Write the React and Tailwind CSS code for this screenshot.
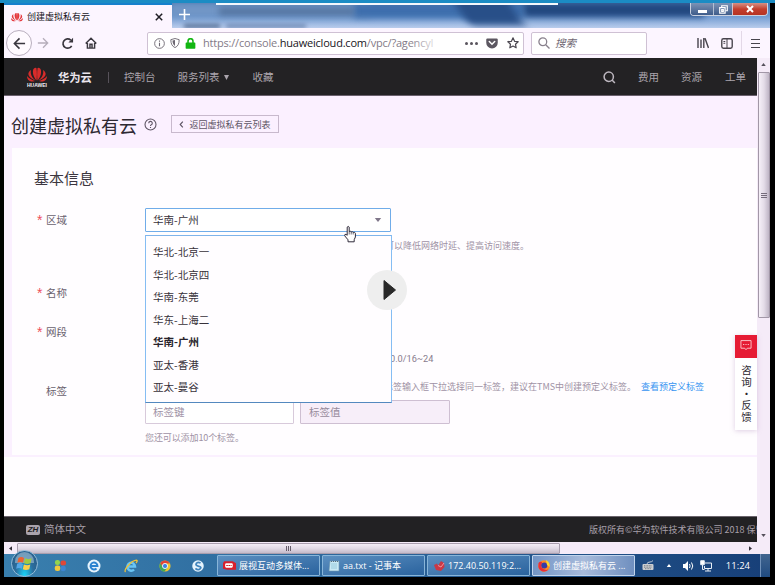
import React from "react";

const regions = ["华北-北京一", "华北-北京四", "华南-东莞", "华东-上海二", "华南-广州", "亚太-香港", "亚太-曼谷"];

function HuaweiLogo({ className }) {
  return (
    <svg viewBox="0 0 40 30" className={className} fill="currentColor">
      <path d="M19 27C13 20 10 11 13 4C16 1 18 1 19 3C20 10 20 19 19 27Z" />
      <path d="M21 27C27 20 30 11 27 4C24 1 22 1 21 3C20 10 20 19 21 27Z" />
      <path d="M17 27C10 21 6 14 8 6C4 8 2 12 3 16C5 21 11 25 17 27Z" />
      <path d="M23 27C30 21 34 14 32 6C36 8 38 12 37 16C35 21 29 25 23 27Z" />
      <path d="M16 28C10 26 4 23 0 18C0 24 3 28 8 29C11 29 14 29 16 28Z" />
      <path d="M24 28C30 26 36 23 40 18C40 24 37 28 32 29C29 29 26 29 24 28Z" />
    </svg>
  );
}

function TabStrip() {
  return (
    <div className="relative flex h-[25px] shrink-0 overflow-hidden bg-linear-to-b from-[#4676af] via-[#6d98cf] to-[#b9ccec]">
      <div className="absolute inset-0">
        <div className="absolute left-[166px] top-0 h-[14px] w-[200px] bg-[#7196c6] blur-[3px]" />
        <div className="absolute left-[350px] top-0 h-[15px] w-[170px] bg-[#3d6ead] blur-[3px]" />
        <div className="absolute left-[455px] -top-2 h-[30px] w-[55px] -skew-x-[-35deg] bg-[#284f88] blur-[4px]" />
        <div className="absolute left-[520px] top-0 h-[14px] w-[180px] bg-[#21477f] blur-[3px]" />
        <div className="absolute left-[215px] top-[5px] h-[7px] w-[135px] bg-[#3c5880]/60 blur-[3px]" />
        <div className="absolute left-[180px] top-[21px] h-[4px] w-[36px] bg-[#536d94] blur-[2px]" />
        <div className="absolute left-[222px] top-[21px] h-[4px] w-[80px] bg-[#5f7ba8]/80 blur-[2px]" />
        <div className="absolute left-[212px] top-0 h-[2px] w-[342px] bg-[#f3f7fc]" />
      </div>
      <div className="relative flex h-full w-[168px] items-center border-t-2 border-[#1780cc] bg-[#fcf5ff] pl-[7px]">
        <HuaweiLogo className="h-[10px] w-[12px] text-[#e4373c]" />
        <span className="ml-[4px] text-[9px] text-[#15131a]">创建虚拟私有云</span>
        <svg viewBox="0 0 8 8" className="ml-auto mr-[9px] size-[8px]" stroke="#201e25" strokeWidth="1.5">
          <path d="M.8.8l6.4 6.4M7.2.8L.8 7.2" />
        </svg>
      </div>
      <svg viewBox="0 0 11 11" className="relative ml-[7px] mt-[6px] size-[11px]" stroke="#fff" strokeWidth="1.6">
        <path d="M5.5 0v11M0 5.5h11" />
      </svg>
      <div className="relative ml-auto mr-[2px] flex h-[13px] overflow-hidden rounded-b-[4px] border border-t-0 border-[#cbd2e0]">
        <div className="flex w-[22px] items-center justify-center bg-linear-to-b from-[#7d93b5] to-[#3f5c8a]">
          <span className="mt-[4px] h-[3px] w-[9px] bg-white" />
        </div>
        <div className="flex w-[19px] items-center justify-center border-l border-[#b4c0d3] bg-linear-to-b from-[#7d93b5] to-[#3f5c8a]">
          <svg viewBox="0 0 10 10" className="size-[9px]" fill="none" stroke="#fff" strokeWidth="1.3">
            <path d="M3 2.6V.8h6.2v5.6H7.6M.8 3h6v6h-6zM3 5.2h1.8v1.8H3z" />
          </svg>
        </div>
        <div className="flex w-[35px] items-center justify-center border-l border-[#d4c0c7] bg-linear-to-b from-[#d48f86] via-[#c33e2d] to-[#b63222]">
          <svg viewBox="0 0 8 8" className="size-[8px]" stroke="#fff" strokeWidth="2">
            <path d="M1 1l6 6M7 1L1 7" />
          </svg>
        </div>
      </div>
    </div>
  );
}

function Toolbar() {
  return (
    <div className="flex h-[30px] shrink-0 items-center bg-[#fcf5ff]">
      <div className="ml-[2px] flex size-[26px] items-center justify-center rounded-full border border-[#b9afbe] bg-[#fffaff]">
        <svg viewBox="0 0 14 14" className="size-[13px]" fill="none" stroke="#3a373f" strokeWidth="1.7">
          <path d="M13 7H1.5M7 1.5L1.5 7L7 12.5" />
        </svg>
      </div>
      <svg viewBox="0 0 14 14" className="ml-[5px] size-[12px]" fill="none" stroke="#b5adba" strokeWidth="1.5">
        <path d="M1 7h11.5M7 1.5L12.500 7L7 12.500" />
      </svg>
      <svg viewBox="0 0 14 14" className="ml-[12px] size-[13px]" fill="none" stroke="#3a373f" strokeWidth="1.8">
        <path d="M11.500 9.500A5 5 0 1 1 10.500 3.300" />
        <path d="M13 .8v5H8z" fill="#3a373f" stroke="none" />
      </svg>
      <svg viewBox="0 0 14 14" className="ml-[11px] size-[12px]" fill="none" stroke="#3a373f" strokeWidth="1.7">
        <path d="M.8 7.500L7 1.500L13.200 7.500M2.800 7v6h8.400V7M5.800 13V8.500h2.400V13" />
      </svg>

      <div className="ml-[50px] flex h-[23px] w-[377px] items-center rounded-[2px] border border-[#cfc1d4] bg-white">
        <svg viewBox="0 0 12 12" className="ml-[6px] size-[11px]" fill="none" stroke="#6d6872" strokeWidth="1">
          <circle cx="6" cy="6" r="5.300" />
          <path d="M6 5.200v3.800M6 2.800v1.200" strokeWidth="1.200" />
        </svg>
        <svg viewBox="0 0 12 12" className="ml-[5px] size-[10px]" fill="none" stroke="#6d6872" strokeWidth="1.100">
          <path d="M1 2L6 .6L11 2C11 7 9.500 10 6 11.500C2.500 10 1 7 1 2Z" />
          <path d="M3 3L6 2.300V9.500C4 8.300 3 6 3 3Z" fill="#6d6872" stroke="none" />
        </svg>
        <svg viewBox="0 0 12 12" className="ml-[5px] size-[11px]" fill="#12b612">
          <path d="M1.500 5H10.500a.8.8 0 0 1 .8.800V11a.7.7 0 0 1-.7.700H1.400A.7.700 0 0 1 .7 11V5.800A.8.800 0 0 1 1.500 5Z" />
          <path d="M3.300 5.500V3.500a2.700 2.700 0 0 1 5.400 0v2" fill="none" stroke="#12b612" strokeWidth="1.700" />
        </svg>
        <div className="relative ml-[7px] w-[240px] overflow-hidden whitespace-nowrap font-['Open_Sans','Noto_Sans',sans-serif] text-[11px] leading-[18px] tracking-[-0.2px] text-[#837a87]">
          https://console.<span className="text-[#17151b]">huaweicloud.com</span>/vpc/?agencyI
          <div className="absolute inset-y-0 right-[4px] w-[30px] bg-linear-to-r from-white/0 to-white/90" />
        </div>
        <div className="ml-auto flex gap-[2px]">
          <span className="size-[3px] rounded-full bg-[#59545d]" />
          <span className="size-[3px] rounded-full bg-[#59545d]" />
          <span className="size-[3px] rounded-full bg-[#59545d]" />
        </div>
        <svg viewBox="0 0 14 13" className="ml-[8px] h-[11px] w-[12px]">
          <path d="M1.500.5h11A1.300 1.300 0 0 1 13.800 1.800V5.500A6.800 6.800 0 0 1 .2 5.500V1.800A1.300 1.300 0 0 1 1.500.5Z" fill="#5c5761" />
          <path d="M3.800 4.200L7 7.300L10.200 4.200" fill="none" stroke="#fff" strokeWidth="1.800" strokeLinecap="round" />
        </svg>
        <svg viewBox="0 0 14 14" className="ml-[9px] mr-[4px] size-[12px]" fill="none" stroke="#4b4750" strokeWidth="1.400" strokeLinejoin="round">
          <path d="M7 1l1.800 4 4.200.500-3.100 2.900.8 4.200L7 10.500l-3.700 2.100.8-4.200L1 5.500 5.200 5z" />
        </svg>
      </div>

      <div className="ml-[7px] flex h-[23px] w-[116px] items-center rounded-[2px] border border-[#cfc1d4] bg-white">
        <svg viewBox="0 0 12 12" className="ml-[6px] size-[12px]" fill="none" stroke="#88808c" strokeWidth="1.300">
          <circle cx="4.800" cy="4.800" r="3.900" />
          <path d="M7.700 7.700L11.500 11.500" />
        </svg>
        <span className="ml-[5px] text-[10.5px] italic text-[#6f6773]">搜索</span>
      </div>
      <svg viewBox="0 0 12 12" className="ml-[50px] size-[12px]" stroke="#48444d" strokeWidth="1.400">
        <path d="M1 1v10M4 2.500V11M6.800 1v10M8 1.200L11.500 11" />
      </svg>
      <svg viewBox="0 0 13 12" className="ml-[12px] h-[11px] w-[12px]" fill="none" stroke="#48444d" strokeWidth="1.500">
        <rect x=".8" y=".8" width="11.400" height="10.400" rx="1.800" />
        <path d="M6.500 1v10M2.600 3.700h2M2.600 5.800h2" strokeWidth="1.100" />
      </svg>
      <div className="ml-[8px] h-[24px] w-px bg-[#e3d8e7]" />
      <div className="ml-[9px] flex w-[9px] flex-col gap-[3px]">
        <span className="h-px bg-[#48444d]" />
        <span className="h-px bg-[#48444d]" />
        <span className="h-px bg-[#48444d]" />
      </div>
    </div>
  );
}

function SiteHeader() {
  return (
    <div className="flex h-[38px] shrink-0 items-center whitespace-nowrap border-b border-[#6a606d] bg-[#232224] pt-[2px] text-[10.5px] text-[#aba5ad]">
      <div className="-mt-px ml-[23px] flex w-[20px] flex-col items-center">
        <HuaweiLogo className="h-[15px] w-[20px] text-[#d92c2b]" />
        <span className="mt-[1px] font-['Liberation_Sans',sans-serif] text-[5px] font-bold leading-[5px] text-[#f4eef5]">HUAWEI</span>
      </div>
      <span className="ml-[11px] text-[11.3px] font-bold text-[#ece6ee]">华为云</span>
      <span className="ml-[16px] h-[11px] w-px bg-[#57525a]" />
      <span className="ml-[15px]">控制台</span>
      <span className="ml-[22px]">服务列表</span>
      <svg viewBox="0 0 6 6" className="ml-[5px] size-[5px]" fill="#aba5ad"><path d="M0 0h6L3 6z" /></svg>
      <span className="ml-[23px]">收藏</span>
      <svg viewBox="0 0 12 12" className="ml-auto size-[13px]" fill="none" stroke="#bdb7bf" strokeWidth="1.400">
        <circle cx="5.300" cy="5.300" r="4.300" />
        <path d="M8.300 8.300L11 11" />
      </svg>
      <span className="ml-[22px]">费用</span>
      <span className="ml-[22px]">资源</span>
      <span className="ml-[23px] mr-[11px]">工单</span>
    </div>
  );
}

function Label({ required, children }) {
  return (
    <div className="flex w-[111px] shrink-0 items-center text-[10.5px] text-[#6a616e]">
      <span className="w-[12px] pl-[3px] font-['Liberation_Sans',sans-serif] text-[14px] leading-none text-[#ee4f5b]">{required ? "*" : ""}</span>
      {children}
    </div>
  );
}

function RegionSelect() {
  return (
    <div className="relative h-[24px] w-[246px]">
      <div className="flex h-full items-center rounded-[1px] border border-[#70ace9] bg-white pl-[7px] text-[10.5px] text-[#37313a]">
        华南-广州
        <svg viewBox="0 0 8 5" className="ml-auto mr-[8px] h-[4px] w-[8px]" fill="#80778a"><path d="M0 0h8L4 5z" /></svg>
      </div>
      <ul className="absolute left-0 top-[27px] z-10 flex h-[168px] w-[247px] flex-col border border-x-[#85bdf3] border-t-[#7fb4ea] border-b-[#5389bf] bg-[#fffdff] pl-[7px] pt-[5px] text-[10.5px] text-[#37313a]">
        {regions.map((r) => (
          <li key={r} className={r === "华南-广州" ? "flex h-[22.5px] items-center font-bold text-[#28232b]" : "flex h-[22.5px] items-center"}>{r}</li>
        ))}
      </ul>
      <svg viewBox="0 0 12 17" className="absolute left-[199px] top-[17px] z-20 h-[18px] w-[12px]" fill="#fff" stroke="#302b3b" strokeWidth="1" strokeLinejoin="round">
        <path d="M3.200 9.800V1.600Q4.200.2 5.200 1.600V6Q6.400 5.200 7.200 6.400Q8.400 5.600 9.200 6.900Q10.800 6.200 11.400 8V11.500L10.200 14.200V16.300H4V14.300L.7 10.300Q.4 8.600 2 8.800Z" />
        <path d="M5.200 6v3M7.200 6.400V9M9.200 6.900V9" fill="none" strokeWidth=".7" />
      </svg>
    </div>
  );
}

function FormCard() {
  return (
    <section className="ml-[8px] h-[307px] whitespace-nowrap bg-[#fffdff] pl-[22px] text-[9px] text-[#a092a5]">
      <h2 className="flex h-[60px] items-center pb-[2px] text-[15px] text-[#3c3640]">基本信息</h2>
      <div className="flex h-[24px]">
        <Label required>区域</Label>
        <RegionSelect />
      </div>
      <div className="flex h-[26px] items-center pl-[351px]">可以降低网络时延、提高访问速度。</div>
      <div className="mt-[23px] flex h-[24px]"><Label required>名称</Label></div>
      <div className="mt-[15px] flex h-[24px]"><Label required>网段</Label></div>
      <div className="flex h-[28px] items-center pl-[356px] pt-[2px] font-['Roboto',sans-serif] text-[9.2px] text-[#887c8d]">0.0/16~24</div>
      <div className="mt-[4px] flex">
        <div className="flex h-[31px]"><Label>标签</Label></div>
        <div>
          <div className="flex h-[20px] items-center pl-[239px]">
            标签输入框下拉选择同一标签，建议在TMS中创建预定义标签。
            <a className="ml-[5px] text-[#3794f1]">查看预定义标签</a>
          </div>
          <div className="mt-[4px] flex gap-[6px] text-[10.5px]">
            <div className="flex h-[24px] w-[149px] items-center rounded-[1px] border border-[#d8cadb] bg-white pl-[7px]">标签键</div>
            <div className="flex h-[24px] w-[150px] items-center rounded-[1px] border border-[#cebfd2] bg-[#f7eef9] pl-[8px] text-[#988b9c]">标签值</div>
          </div>
          <div className="mt-[4px] flex h-[19px] items-center tracking-[-0.1px]">您还可以添加10个标签。</div>
        </div>
      </div>
    </section>
  );
}

function FeedbackWidget() {
  return (
    <aside className="absolute right-0 top-[239px] z-20 flex h-[95px] w-[22px] flex-col items-center bg-white text-[10.5px] leading-[12px] text-[#2c272f] shadow-[0_1px_5px_rgba(160,120,175,0.35)]">
      <div className="mb-[7px] flex h-[23px] w-full items-center justify-center bg-[#e61b34]">
        <svg viewBox="0 0 14 13" className="mt-[-2px] h-[11px] w-[12px]" fill="none" stroke="#ffd9dc" strokeWidth="1">
          <path d="M1 .7h12v9H8.500L7 11.500L5.500 9.700H1zM3.500 5.300H5M6.300 5.300h1.400M9 5.300h1.500" />
        </svg>
      </div>
      <span className="tracking-[1.2px] [text-orientation:upright] [writing-mode:vertical-rl]">咨询·反馈</span>
    </aside>
  );
}

function PageView() {
  return (
    <div className="flex w-[753px] shrink-0 flex-col">
      <SiteHeader />
      <main className="relative h-[420px] bg-[#fffdff]">
        <div className="h-[361px] bg-[#fbf0ff] pb-[2px]">
          <div className="flex h-[52px] items-center pl-[7px] pt-[8px]">
            <h1 className="-mt-[2px] text-[18px] leading-none text-[#2e2932]">创建虚拟私有云</h1>
            <svg viewBox="0 0 13 13" className="-mt-[3px] ml-[7px] size-[13px]" fill="none" stroke="#5f5665" strokeWidth="1.100">
              <circle cx="6.500" cy="6.500" r="5.500" />
              <path d="M4.700 5.200a1.800 1.800 0 1 1 2.600 1.600q-.8.400-.8 1.200M6.500 9v1" />
            </svg>
            <button className="-mt-[4px] ml-[14px] flex h-[18px] w-[108px] items-center justify-center whitespace-nowrap border border-[#c8b9cd] text-[9px] text-[#5d5463]">
              <svg viewBox="0 0 5 8" className="mr-[5px] h-[7px] w-[5px]" fill="none" stroke="#5d5463" strokeWidth="1.300"><path d="M4 .8L1 4L4 7.200" /></svg>
              返回虚拟私有云列表
            </button>
          </div>
          <FormCard />
        </div>
        <FeedbackWidget />
      </main>
      <footer className="flex h-[26px] items-center overflow-hidden whitespace-nowrap border-t border-[#6a636c] bg-[#222123] pl-[22px] text-[10.5px] text-[#a69fa8]">
        <span className="flex h-[10px] w-[14px] shrink-0 items-center justify-center rounded-[2px] bg-[#aaa3ac] font-['Liberation_Sans',sans-serif] text-[8px] font-bold italic leading-none text-[#222123]">ZH</span>
        <span className="ml-[4px]">简体中文</span>
        <span className="ml-auto w-[168px] shrink-0 overflow-hidden text-[9px] leading-[14px]">版权所有©华为软件技术有限公司 2018 保留一切权利</span>
      </footer>
    </div>
  );
}

function VerticalScrollbar() {
  return (
    <div className="flex w-[13px] flex-col items-center bg-[#f5ebf8]">
      <svg viewBox="0 0 6 4" className="mt-[5px] h-[3px] w-[5px]" fill="#55505b"><path d="M0 4h6L3 0z" /></svg>
      <div className="mt-[6px] flex h-[246px] w-[12px] flex-col items-center justify-center gap-[1px] rounded-[1px] border border-[#a297a7] bg-linear-to-r from-[#f6f0f8] via-[#e4dce8] to-[#bfb5c5]">
        <span className="h-px w-[6px] bg-[#756c7b]" />
        <span className="h-px w-[6px] bg-[#756c7b]" />
        <span className="h-px w-[6px] bg-[#756c7b]" />
      </div>
      <svg viewBox="0 0 6 4" className="mb-[5px] mt-auto h-[3px] w-[5px]" fill="#55505b"><path d="M0 0h6L3 4z" /></svg>
    </div>
  );
}

function HorizontalScrollbar() {
  return (
    <div className="flex h-[12px] shrink-0 items-center bg-[#f5ebf8]">
      <svg viewBox="0 0 4 6" className="ml-[5px] h-[5px] w-[3px]" fill="#35303b"><path d="M4 0v6L0 3z" /></svg>
      <div className="ml-[5px] flex h-[11px] w-[543px] items-center justify-center gap-[1px] rounded-[1px] border border-[#a99eae] bg-linear-to-b from-[#f4edf6] via-[#e1d9e5] to-[#c4bac9]">
        <span className="h-[5px] w-px bg-[#655c6b]" />
        <span className="h-[5px] w-px bg-[#655c6b]" />
        <span className="h-[5px] w-px bg-[#655c6b]" />
      </div>
      <svg viewBox="0 0 4 6" className="ml-auto mr-[18px] h-[5px] w-[3px]" fill="#35303b"><path d="M0 0v6L4 3z" /></svg>
    </div>
  );
}

function TaskButton({ icon, active, children }) {
  return (
    <div className={active
      ? "flex h-[21px] w-[103px] shrink-0 items-center gap-[3px] overflow-hidden rounded-[1px] border border-[#c1d4ec] bg-linear-to-r from-[#7395c5] via-[#a8bbdb] to-[#6f8fbf] pl-[5px]"
      : "flex h-[21px] w-[103px] shrink-0 items-center gap-[3px] overflow-hidden rounded-[1px] border border-[#88b5d9] bg-linear-to-br from-[#5b8fc0] to-[#2a639e] pl-[5px]"}>
      {icon}
      <span>{children}</span>
    </div>
  );
}

function Taskbar() {
  return (
    <div className="flex h-[23px] shrink-0 items-center whitespace-nowrap bg-linear-to-r from-[#397fae] via-[#2b6398] to-[#173f78] font-['Open_Sans','Noto_Sans_CJK_SC',sans-serif] text-[9px] text-white">
      <div className="relative z-10 -mt-[4px] ml-[7px] flex size-[27px] shrink-0 items-center justify-center rounded-full border border-[#94bcd8] bg-radial-[at_50%_100%] from-[#19d6fa] via-[#2b6f9f] to-[#29567f]">
        <div className="absolute inset-x-[3px] top-[1px] h-[11px] rounded-t-full bg-white/35" />
        <svg viewBox="0 0 18 16" className="relative h-[15px] w-[17px]">
          <path d="M2.500 2Q5.500.3 8.500 2L7.500 7.200Q4.500 5.600 1.400 7.200Z" fill="#ec6233" />
          <path d="M9.500 2.500Q13 4.200 16.600 2.500L15.500 7.800Q12 9.300 8.500 7.800Z" fill="#a1ca42" />
          <path d="M1.200 8.300Q4.300 6.800 7.300 8.400L6.200 13.500Q3.200 12 .1 13.500Z" fill="#55a7e6" />
          <path d="M8.300 9Q11.800 10.600 15.200 9L14.100 14Q10.600 15.600 7.200 14Z" fill="#fccf49" />
        </svg>
      </div>
      <svg viewBox="0 0 14 14" className="ml-[16px] size-[13px]">
        <rect x="1" y="1" width="5.500" height="5.500" rx="2.500" fill="#94d34d" />
        <rect x="7" y="1.500" width="6" height="5.500" rx="2.500" fill="#df4837" />
        <rect x=".8" y="7" width="6" height="6" rx="2.500" fill="#f2c83b" />
        <rect x="7.200" y="7.300" width="5.500" height="6" rx="2.500" fill="#3d85d1" />
      </svg>
      <svg viewBox="0 0 14 14" className="ml-[20px] size-[14px]">
        <circle cx="7" cy="7" r="6.500" fill="#e6f3fc" />
        <path d="M3.500 7H10.500A3.500 3.500 0 1 0 9.500 9.500" fill="none" stroke="#2a82d0" strokeWidth="1.900" />
      </svg>
      <svg viewBox="0 0 14 14" className="ml-[23px] size-[14px]" fill="none">
        <path d="M4 7.500H11A3.800 4 0 1 0 10 10.500" stroke="#69c4f4" strokeWidth="2.500" />
        <path d="M1.500 13C-.5 11 7 1.500 12.500 1.200Q14 1.500 12 4" stroke="#f0c239" strokeWidth="1.300" />
      </svg>
      <svg viewBox="0 0 14 14" className="ml-[21px] size-[12px]">
        <circle cx="7" cy="7" r="6.500" fill="#efc52f" />
        <path d="M1.400 3.700A6.500 6.500 0 0 1 12.700 4H7L4.200 8.500Z" fill="#e34436" />
        <path d="M1.400 3.700A6.500 6.500 0 0 0 6.500 13.500L9.500 9L4.500 8.500Z" fill="#43a953" />
        <circle cx="7" cy="7" r="3" fill="#3c83e2" stroke="#fff" />
      </svg>
      <svg viewBox="0 0 14 14" className="ml-[21px] size-[12px]">
        <circle cx="7" cy="7" r="6.700" fill="#e7f4fd" />
        <path d="M10 3.500Q6.500 1.700 5 4T8 7.500T8.500 11Q6 12 4 9.700" fill="none" stroke="#4285bd" strokeWidth="2" />
      </svg>
      <div className="ml-[13px] flex gap-[2px]">
        <TaskButton icon={
          <svg viewBox="0 0 12 12" className="size-[13px] shrink-0">
            <path d="M1 2h8l3 2v6H4L0 9V4z" fill="#d71f2c" />
            <rect x="2" y="4" width="7" height="4" rx="1" fill="#fff" />
            <path d="M3 6h5" stroke="#d71f2c" strokeDasharray="1.500 .5" />
          </svg>
        }>展视互动多媒体...</TaskButton>
        <TaskButton icon={
          <svg viewBox="0 0 12 12" className="size-[12px] shrink-0">
            <path d="M2 1h9v10H1z" fill="#c9eaf5" stroke="#6b93ab" strokeWidth=".6" />
            <path d="M3 1.500h7" stroke="#5a6f7b" strokeDasharray="1 1" />
            <path d="M3 4h6M3 6h6M3 8h6" stroke="#81bdd1" strokeWidth=".7" />
          </svg>
        }>aa.txt - 记事本</TaskButton>
        <TaskButton icon={
          <svg viewBox="0 0 12 12" className="size-[12px] shrink-0">
            <path d="M1 5L4 3.500L5 5.500L8 1L11 3L11.500 7L8 11L3 10Z" fill="#ca3845" />
            <path d="M5 5.500L8 7L11 3" stroke="#f39298" fill="none" />
          </svg>
        }>172.40.50.119:2...</TaskButton>
        <TaskButton active icon={
          <svg viewBox="0 0 12 12" className="size-[12px] shrink-0">
            <circle cx="6" cy="6" r="5.800" fill="#ff8a22" />
            <path d="M.5 3Q2 1 4 2L3.200 7Q6 11 10.500 9.500A5.800 5.800 0 0 1 .4 7Z" fill="#e92d3a" />
            <circle cx="6.300" cy="5.500" r="3" fill="#353ca7" />
            <path d="M8 0Q12.500 3 11.500 7L9 5Z" fill="#ffd92f" />
          </svg>
        }>创建虚拟私有云 ...</TaskButton>
      </div>
      <svg viewBox="0 0 12 11" className="ml-auto h-[11px] w-[12px] shrink-0">
        <path d="M5 4Q5 2 8 2Q10 2 11 .5" fill="none" stroke="#dfe4ea" strokeWidth=".8" />
        <rect x=".5" y="4" width="11" height="6" rx="1" fill="#cbced1" />
        <path d="M2 5.700h8M2 7.200h8M3 8.700h6" stroke="#626a73" strokeWidth=".8" strokeDasharray="1 .6" />
      </svg>
      <svg viewBox="0 0 6 4" className="ml-[12px] h-[3px] w-[6px]" fill="#fff"><path d="M0 4h6L3 0z" /></svg>
      <svg viewBox="0 0 12 12" className="ml-[10px] size-[12px]" fill="none" stroke="#fff">
        <path d="M1 4h2l3-3v10L3 8H1z" fill="#fff" stroke="none" />
        <path d="M7.500 4q1.200 2 0 4M9.500 2.500q2.500 3.500 0 7" />
      </svg>
      <svg viewBox="0 0 12 12" className="ml-[6px] size-[12px]" fill="none" stroke="#e6edf5">
        <path d="M5 3h6.500v5.500H4.500V6M8 9v2M5 11h6M2.500 5v4.500h2" />
        <path d="M.7.700h3.600v4H.7z" fill="#fff" />
      </svg>
      <span className="ml-[14px] text-[9.5px]">11:24</span>
      <div className="ml-[10px] h-full w-[10px] shrink-0 border-l border-[#6f90b8] bg-linear-to-b from-[#41658f] to-[#204b80]" />
    </div>
  );
}

export default function App() {
  return (
    <div className="relative flex h-[585px] w-[775px] flex-col overflow-hidden bg-black font-['Noto_Sans_CJK_SC',sans-serif] leading-none">
      <div className="h-[3px] shrink-0 bg-[#1b8cc4]" />
      <div className="ml-[4px] flex w-[766px] flex-col">
        <TabStrip />
        <Toolbar />
        <div className="flex h-[484px]">
          <PageView />
          <VerticalScrollbar />
        </div>
        <HorizontalScrollbar />
        <Taskbar />
      </div>
      <button className="absolute left-[367px] top-[270px] z-30 flex size-[40px] items-center justify-center rounded-full bg-[#eeeeee]">
        <svg viewBox="0 0 13 20" className="ml-[4px] h-[20px] w-[13px]" fill="#292929"><path d="M1 .5L12.500 10L1 19.500Z" stroke="#292929" strokeLinejoin="round" /></svg>
      </button>
    </div>
  );
}
